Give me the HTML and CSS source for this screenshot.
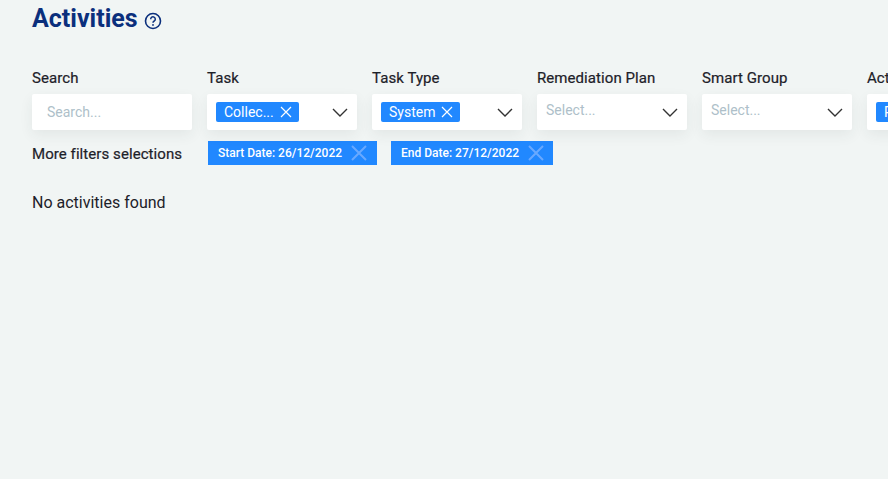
FILE: index.html
```html
<!DOCTYPE html>
<html lang="en">
<head>
<meta charset="utf-8">
<title>Activities</title>
<link rel="stylesheet" href="styles.css">
</head>
<body>
<main class="page">
  <header class="title-row">
    <h1 class="title">Activities</h1>
    <svg class="help" width="18" height="18" viewBox="0 0 18 18" aria-hidden="true"><circle cx="9" cy="9" r="7.5" fill="none" stroke="#0b2f7c" stroke-width="1.6"/><path d="M6.7 7.2a2.3 2.3 0 1 1 3.6 1.8c-.9.5-1.3.9-1.3 1.7" fill="none" stroke="#0b2f7c" stroke-width="1.5"/><circle cx="9" cy="12.9" r=".95" fill="#0b2f7c"/></svg>
  </header>
  <section class="filters">
    <div class="filter filter-search">
      <label class="label">Search</label>
      <div class="control search-control"><span class="placeholder">Search...</span></div>
    </div>
    <div class="filter">
      <label class="label">Task</label>
      <div class="control">
        <span class="tag">Collec...<svg class="tag-x" width="12" height="12" viewBox="0 0 12 12"><path d="M1 1l10 10M11 1L1 11" stroke="#fff" stroke-width="1.2" fill="none"/></svg></span>
        <svg class="chevron" width="16" height="9" viewBox="0 0 16 9"><path d="M1 1l7 7 7-7" stroke="#333" stroke-width="1.4" fill="none"/></svg>
      </div>
    </div>
    <div class="filter">
      <label class="label">Task Type</label>
      <div class="control">
        <span class="tag">System<svg class="tag-x" width="12" height="12" viewBox="0 0 12 12"><path d="M1 1l10 10M11 1L1 11" stroke="#fff" stroke-width="1.2" fill="none"/></svg></span>
        <svg class="chevron" width="16" height="9" viewBox="0 0 16 9"><path d="M1 1l7 7 7-7" stroke="#333" stroke-width="1.4" fill="none"/></svg>
      </div>
    </div>
    <div class="filter">
      <label class="label">Remediation Plan</label>
      <div class="control">
        <span class="select-placeholder">Select...</span>
        <svg class="chevron" width="16" height="9" viewBox="0 0 16 9"><path d="M1 1l7 7 7-7" stroke="#333" stroke-width="1.4" fill="none"/></svg>
      </div>
    </div>
    <div class="filter">
      <label class="label">Smart Group</label>
      <div class="control">
        <span class="select-placeholder">Select...</span>
        <svg class="chevron" width="16" height="9" viewBox="0 0 16 9"><path d="M1 1l7 7 7-7" stroke="#333" stroke-width="1.4" fill="none"/></svg>
      </div>
    </div>
    <div class="filter">
      <label class="label">Activity</label>
      <div class="control">
        <span class="tag">Pending<svg class="tag-x" width="12" height="12" viewBox="0 0 12 12"><path d="M1 1l10 10M11 1L1 11" stroke="#fff" stroke-width="1.2" fill="none"/></svg></span>
      </div>
    </div>
  </section>
  <section class="more">
    <span class="more-label">More filters selections</span>
    <span class="chip chip-start">Start Date: 26/12/2022<svg class="chip-x" width="16" height="16" viewBox="0 0 16 16"><path d="M1 1l14 14M15 1L1 15" stroke="#69a9ff" stroke-width="2" fill="none"/></svg></span>
    <span class="chip chip-end">End Date: 27/12/2022<svg class="chip-x" width="16" height="16" viewBox="0 0 16 16"><path d="M1 1l14 14M15 1L1 15" stroke="#69a9ff" stroke-width="2" fill="none"/></svg></span>
  </section>
  <p class="empty">No activities found</p>
</main>
</body>
</html>
```
FILE: styles.css
```css
* { box-sizing: border-box; }
html, body { margin: 0; height: 100%; overflow: hidden; }
body {
  background: #f1f5f4;
  font-family: Roboto, "Liberation Sans", sans-serif;
  color: #1d2129;
}
.page { padding: 0 0 0 32px; width: 888px; overflow: hidden; }
.title-row { display: flex; align-items: center; height: 38px; gap: 6px; }
.title { margin: 0; font-size: 25px; line-height: 38px; font-weight: 700; color: #0b2f7c; }
.help { margin-top: 3px; }
.filters { display: flex; gap: 15px; margin-top: 30px; width: 1000px; }
.filter { width: 150px; flex: none; }
.filter-search { width: 160px; }
.label { display: block; font-size: 15px; font-weight: 400; line-height: 20px; margin-bottom: 6px; letter-spacing: .07px; color: #1d2129; -webkit-text-stroke: .2px #1d2129; }
.control {
  position: relative;
  display: flex;
  align-items: center;
  height: 36px;
  padding: 0 9px;
  background: #fff;
  border-radius: 2px;
  box-shadow: 0 5px 14px rgba(40, 60, 60, .07);
}
.search-control { padding-left: 15px; }
.placeholder { font-size: 14px; color: #aebfc9; }
.select-placeholder { font-size: 14px; color: #aebfc9; margin-top: -4px; }
.tag {
  display: inline-flex;
  align-items: center;
  height: 20px;
  padding: 0 7px 0 8px;
  background: #2188ff;
  color: #fff;
  font-size: 14px;
  border-radius: 2px;
}
.tag-x { margin-left: 6px; }
.chevron { position: absolute; right: 9px; top: 14px; }
.more { display: flex; align-items: center; height: 24px; margin-top: 11px; }
.more-label { width: 176px; margin-top: 2px; font-size: 15px; font-weight: 400; letter-spacing: .07px; color: #1d2129; -webkit-text-stroke: .2px #1d2129; }
.chip {
  display: inline-flex;
  align-items: center;
  height: 24px;
  padding: 0 9px 0 10px;
  background: #2188ff;
  color: #fff;
  font-size: 12px;
  font-weight: 500;
}
.chip-start { margin-right: 14px; padding-right: 10px; }
.chip-x { margin-left: 9px; }
.empty { margin: 26px 0 0; font-size: 16px; line-height: 24px; color: #1d2129; }
```
